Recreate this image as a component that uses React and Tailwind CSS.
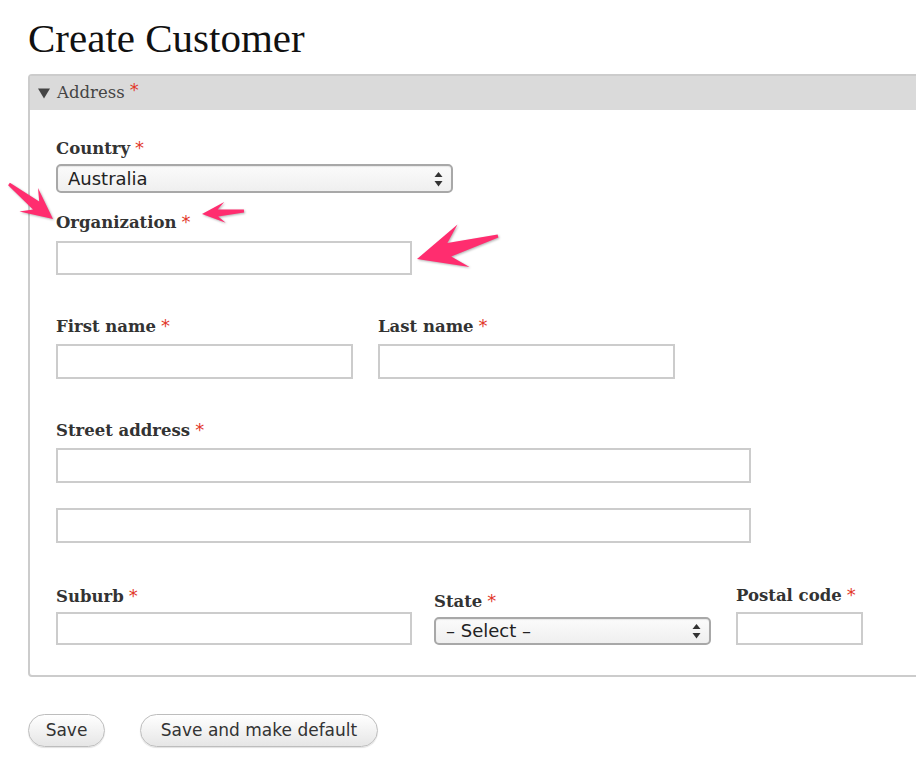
import React from "react";

const serif = { fontFamily: '"DejaVu Serif", Georgia, serif' };
const sans = { fontFamily: '"DejaVu Sans", "Lucida Grande", Verdana, sans-serif' };

// skitch style annotation arrow
const arrowPoints = (x1, y1, x2, y2, L, W, w1, w2) => {
  const dx = x2 - x1;
  const dy = y2 - y1;
  const len = Math.hypot(dx, dy);
  const ux = dx / len;
  const uy = dy / len;
  const nx = -uy;
  const ny = ux;
  const bx = x2 - ux * L;
  const by = y2 - uy * L;
  const back = L * 0.15;
  const join = L * 0.2;
  const p = (x, y) => `${x.toFixed(1)},${y.toFixed(1)}`;
  return [
    p(x2, y2),
    p(bx - ux * back + (nx * W) / 2, by - uy * back + (ny * W) / 2),
    p(bx + ux * join + (nx * w2) / 2, by + uy * join + (ny * w2) / 2),
    p(x1 + (nx * w1) / 2, y1 + (ny * w1) / 2),
    p(x1 - (nx * w1) / 2, y1 - (ny * w1) / 2),
    p(bx + ux * join - (nx * w2) / 2, by + uy * join - (ny * w2) / 2),
    p(bx - ux * back - (nx * W) / 2, by - uy * back - (ny * W) / 2),
  ].join(" ");
};

const Req = () => (
  <span className="ml-[5px] text-[18px] font-normal leading-none text-[#e2382a]" style={sans}>
    *
  </span>
);

const Label = ({ children }) => (
  <div className="text-[16.5px] leading-[20px] font-bold text-[#333]" style={serif}>
    {children}
    <Req />
  </div>
);

const Input = ({ className }) => (
  <input
    type="text"
    className={`block border-2 border-[#cccccc] bg-white outline-none ${className}`}
  />
);

const SelectBox = ({ value, className }) => (
  <div
    className={`flex items-center justify-between rounded-[5px] border-2 border-[#a8a8a8] bg-gradient-to-b from-[#fbfbfb] to-[#efefef] pl-[10px] pr-[8px] text-[18px] text-[#222] shadow-[inset_0_1px_1px_rgba(0,0,0,0.08)] ${className}`}
    style={sans}
  >
    <span className="leading-none">{value}</span>
    <svg width="9" height="16" viewBox="0 0 9 16">
      <polygon points="4.5,1 8.5,6 0.5,6" fill="#333" />
      <polygon points="0.5,10 8.5,10 4.5,15.5" fill="#333" />
    </svg>
  </div>
);

const Button = ({ children, className }) => (
  <button
    className={`h-[33px] rounded-full border border-[#bdbdbd] bg-gradient-to-b from-white to-[#e6e6e6] text-[17px] text-[#333] shadow-[0_1px_1px_rgba(0,0,0,0.12)] ${className}`}
    style={sans}
  >
    {children}
  </button>
);

const App = () => {
  return (
    <div className="relative h-[766px] w-[916px] overflow-hidden bg-white">
      <h1
        className="pl-[28px] pt-[16px] text-[41px] leading-[44px] text-[#111]"
        style={{ fontFamily: '"Liberation Serif", Georgia, serif' }}
      >
        Create Customer
      </h1>

      {/* Address fieldset */}
      <div className="ml-[28px] mt-[14px] w-[920px] rounded-[4px] border-2 border-[#cccccc]">
        <div className="flex h-[34px] items-center bg-[#dadada] pl-[8px] text-[16.5px] text-[#444]" style={serif}>
          <svg width="12" height="11" viewBox="0 0 12 11" className="mr-[7px] mt-[1px]">
            <polygon points="0,0.5 12,0.5 6,10.5" fill="#444" />
          </svg>
          <span>Address</span>
          <span className="ml-[5px] -mt-[6px] text-[18px] leading-none text-[#e2382a]" style={sans}>
            *
          </span>
        </div>

        <div className="pl-[26px] pt-[29px] pb-[30px]">
          <Label>Country</Label>
          <SelectBox value="Australia" className="mt-[5px] h-[29px] w-[397px]" />

          <div className="mt-[20px]">
            <Label>Organization</Label>
            <Input className="mt-[8px] h-[34px] w-[356px]" />
          </div>

          <div className="mt-[42px] flex gap-[25px]">
            <div>
              <Label>First name</Label>
              <Input className="mt-[7px] h-[35px] w-[297px]" />
            </div>
            <div>
              <Label>Last name</Label>
              <Input className="mt-[7px] h-[35px] w-[297px]" />
            </div>
          </div>

          <div className="mt-[42px]">
            <Label>Street address</Label>
            <Input className="mt-[7px] h-[35px] w-[695px]" />
            <Input className="mt-[25px] h-[35px] w-[695px]" />
          </div>

          <div className="mt-[44px] flex items-start">
            <div>
              <Label>Suburb</Label>
              <Input className="mt-[5px] h-[33px] w-[356px]" />
            </div>
            <div className="ml-[22px] mt-[5px]">
              <Label>State</Label>
              <SelectBox value="– Select –" className="mt-[5px] h-[28px] w-[277px]" />
            </div>
            <div className="ml-[25px] -mt-[1px]">
              <Label>Postal code</Label>
              <Input className="mt-[6px] h-[33px] w-[127px]" />
            </div>
          </div>
        </div>
      </div>

      <div className="ml-[28px] mt-[37px] flex gap-[35px]">
        <Button className="w-[77px]">Save</Button>
        <Button className="w-[238px]">Save and make default</Button>
      </div>

      {/* annotation arrows */}
      <svg
        className="pointer-events-none absolute left-0 top-0 drop-shadow-[1px_1px_1px_rgba(0,0,0,0.3)]"
        width="916"
        height="766"
      >
        <polygon points={arrowPoints(9, 184, 53, 219, 27, 30, 3, 10)} fill="#ff2d6f" />
        <polygon points={arrowPoints(244, 211, 202, 214, 20, 21, 3, 7)} fill="#ff2d6f" />
        <polygon points={arrowPoints(498, 236, 417, 259, 42, 44, 3, 14)} fill="#ff2d6f" />
      </svg>
    </div>
  );
};

export default App;
